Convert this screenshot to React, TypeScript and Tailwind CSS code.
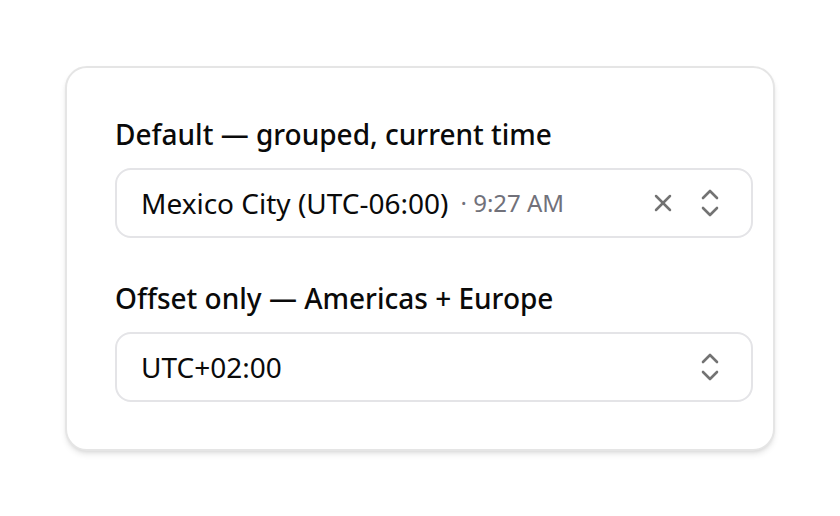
import React from 'react';

const XIcon = () => (
  <svg width="18" height="18" viewBox="0 0 18 18" fill="none" stroke="currentColor" strokeWidth="2.5" strokeLinecap="round">
    <path d="M2 2 16 16" />
    <path d="M16 2 2 16" />
  </svg>
);

const UpDownIcon = () => (
  <svg width="20" height="30" viewBox="0 0 20 30" fill="none" stroke="currentColor" strokeWidth="2.6" strokeLinecap="round" strokeLinejoin="round">
    <path d="M3 10 10 3 17 10" />
    <path d="M3 20 10 27 17 20" />
  </svg>
);

function Field({ label, value, time, clearable }: { label: string; value: string; time?: string; clearable?: boolean }) {
  return (
    <div className="flex flex-col gap-[16px]">
      <div className="text-[28px] leading-[36px] font-medium text-[#0a0a0a]">{label}</div>
      <div className="h-[70px] flex items-center rounded-[16px] border-2 border-[#e4e4e7] bg-white pl-[24px] pr-[31px]">
        <span className="text-[28px] text-[#0a0a0a]">{value}</span>
        {time && <span className="ml-[12px] text-[24px] text-[#71717a]">· {time}</span>}
        <div className="ml-auto flex items-center gap-[28px] text-[#737373]">
          {clearable && <XIcon />}
          <UpDownIcon />
        </div>
      </div>
    </div>
  );
}

export default function App() {
  return (
    <div className="w-[840px] h-[516px] bg-white flex items-center justify-center" style={{ fontFamily: '"Noto Sans", sans-serif' }}>
      <div className="w-[710px] rounded-[22px] border-2 border-[#e5e5e5] bg-white shadow-md pl-[48px] pr-[20px] pt-[48px] pb-[47px] flex flex-col gap-[42px]">
        <Field label="Default — grouped, current time" value="Mexico City (UTC-06:00)" time="9:27 AM" clearable />
        <Field label="Offset only — Americas + Europe" value="UTC+02:00" />
      </div>
    </div>
  );
}
